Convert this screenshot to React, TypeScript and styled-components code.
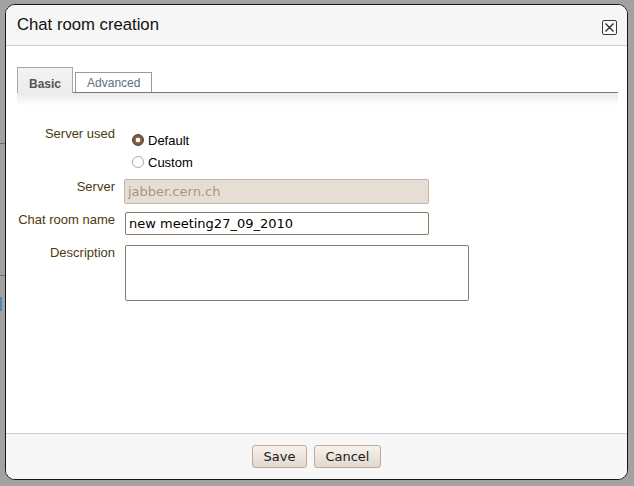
import React from "react";
import styled, { createGlobalStyle } from "styled-components";

const GlobalStyle = createGlobalStyle`
  html, body {
    margin: 0;
    padding: 0;
  }
  body {
    width: 634px;
    height: 486px;
    overflow: hidden;
    font-family: "Liberation Sans", Arial, sans-serif;
    background:
      linear-gradient(#6e6e6e, #6e6e6e) 0 143px / 5px 1px no-repeat,
      linear-gradient(#6e6e6e, #6e6e6e) 0 275px / 5px 1px no-repeat,
      linear-gradient(#4f86b8, #4f86b8) 0 297px / 2px 14px no-repeat,
      #a2a2a2;
  }
  * { box-sizing: border-box; }
`;

const Dialog = styled.div`
  margin: 4px 0 0 5px;
  width: 623px;
  height: 476px;
  border: 1px solid #151515;
  border-radius: 10px;
  overflow: hidden;
  background: #fff;
  display: flex;
  flex-direction: column;
`;

const Header = styled.div`
  height: 41px;
  flex: none;
  display: flex;
  align-items: center;
  justify-content: space-between;
  padding: 0 10px 0 11px;
  background: #f6f6f6;
  border-bottom: 1px solid #cfcfcf;
`;

const Title = styled.h1`
  margin: 0;
  font-family: "Liberation Sans", Arial, sans-serif;
  font-size: 16.7px;
  font-weight: normal;
  color: #111;
`;

const CloseButton = styled.button`
  width: 15px;
  height: 15px;
  margin-top: 5px;
  padding: 0;
  border: 1px solid #3a3a3a;
  border-radius: 2px;
  background: #fafafa;
  display: flex;
  align-items: center;
  justify-content: center;
  cursor: pointer;
`;

const Body = styled.div`
  flex: 1;
  padding-top: 21px;
  background: #fff;
`;

const TabArea = styled.div`
  margin: 0 9px 0 11px;
`;

const TabBar = styled.div`
  height: 26px;
  display: flex;
  align-items: flex-end;
  gap: 2px;
  border-bottom: 1px solid #7a7a7a;
`;

const Tab = styled.div<{ $active?: boolean }>`
  font-family: "Liberation Sans", Arial, sans-serif;
  font-size: 12px;
  line-height: 18px;
  border: 1px solid ${(p) => (p.$active ? "#a8a8a8" : "#9a9a9a")};
  border-bottom: none;
  ${(p) =>
    p.$active
      ? `
    height: 26px;
    margin-bottom: -1px;
    padding: 7px 11px 0 11px;
    font-weight: bold;
    color: #555;
    background: linear-gradient(#f3f3f3, #ececec);
  `
      : `
    height: 20px;
    padding: 1px 11px 0 11px;
    color: #5f6e7e;
    background: #fff;
  `}
`;

const TabShadow = styled.div`
  height: 13px;
  background: linear-gradient(#eaeaea, #ffffff);
`;

const Form = styled.div`
  padding-top: 20px;
`;

const Row = styled.div<{ $mt?: number }>`
  display: flex;
  align-items: flex-start;
  margin-top: ${(p) => p.$mt ?? 0}px;
`;

const Label = styled.label`
  flex: none;
  width: 109px;
  margin-right: 10px;
  text-align: right;
  font-family: "Liberation Sans", Arial, sans-serif;
  font-size: 13px;
  line-height: 16px;
  color: #4a3b0c;
`;

const RadioGroup = styled.div`
  padding-top: 7px;
  display: flex;
  flex-direction: column;
`;

const RadioItem = styled.label`
  height: 22px;
  display: flex;
  align-items: flex-start;
  padding-left: 7px;
  font-family: "Liberation Sans", Arial, sans-serif;
  font-size: 13px;
  line-height: 16px;
  color: #000;
`;

const Radio = styled.input`
  appearance: none;
  -webkit-appearance: none;
  margin: 1px 4px 0 0;
  width: 12px;
  height: 12px;
  border-radius: 50%;
  border: 1px solid #b2aaa2;
  background: #fff;
  &:checked {
    border-color: #5b3b29;
    background: radial-gradient(circle, #ffffff 0 2px, #8a6450 2.6px, #6e4a36 100%);
  }
`;

const TextInput = styled.input<{ $width: number; $height: number; $shift?: number }>`
  width: ${(p) => p.$width}px;
  height: ${(p) => p.$height}px;
  margin-left: ${(p) => p.$shift ?? 0}px;
  padding: 0 3px;
  font-family: "DejaVu Sans", Verdana, sans-serif;
  font-size: 13px;
  color: #000;
  border: 1px solid #8b7a68;
  border-radius: 2px;
  background: #fff;
  outline: none;
  &:disabled {
    background: #e6ded5;
    border-color: #c4b4a3;
    color: #a69684;
  }
`;

const TextArea = styled.textarea`
  width: 344px;
  height: 56px;
  padding: 3px;
  font-family: "DejaVu Sans", Verdana, sans-serif;
  font-size: 13px;
  border: 1px solid #8b7a68;
  border-radius: 2px;
  resize: none;
  outline: none;
`;

const Footer = styled.div`
  height: 46px;
  flex: none;
  display: flex;
  justify-content: center;
  align-items: flex-start;
  gap: 7px;
  padding-top: 11px;
  background: #f7f7f7;
  border-top: 1px solid #cfcfcf;
`;

const Button = styled.button`
  height: 23px;
  padding: 0 10.5px;
  font-family: "DejaVu Sans", Verdana, sans-serif;
  font-size: 13px;
  color: #1a1a1a;
  border: 1px solid #bcab9a;
  border-radius: 3px;
  background: linear-gradient(#f7f2ed, #e2d8ce);
  cursor: pointer;
`;

const CloseIcon = () => (
  <svg width="11" height="11" viewBox="0 0 11 11">
    <path d="M1.5 1.5 L9.5 9.5 M9.5 1.5 L1.5 9.5" stroke="#222" strokeWidth="1.2" />
  </svg>
);

export default function App() {
  return (
    <>
      <GlobalStyle />
      <Dialog>
        <Header>
          <Title>Chat room creation</Title>
          <CloseButton aria-label="Close">
            <CloseIcon />
          </CloseButton>
        </Header>
        <Body>
          <TabArea>
            <TabBar>
              <Tab $active>Basic</Tab>
              <Tab>Advanced</Tab>
            </TabBar>
            <TabShadow />
          </TabArea>
          <Form>
            <Row>
              <Label>Server used</Label>
              <RadioGroup>
                <RadioItem>
                  <Radio type="radio" name="server" defaultChecked />
                  Default
                </RadioItem>
                <RadioItem>
                  <Radio type="radio" name="server" />
                  Custom
                </RadioItem>
              </RadioGroup>
            </Row>
            <Row $mt={2}>
              <Label>Server</Label>
              <TextInput $width={305} $height={25} $shift={-1} disabled defaultValue="jabber.cern.ch" />
            </Row>
            <Row $mt={8}>
              <Label>Chat room name</Label>
              <TextInput $width={304} $height={23} defaultValue="new meeting27_09_2010" />
            </Row>
            <Row $mt={10}>
              <Label>Description</Label>
              <TextArea />
            </Row>
          </Form>
        </Body>
        <Footer>
          <Button>Save</Button>
          <Button>Cancel</Button>
        </Footer>
      </Dialog>
    </>
  );
}
